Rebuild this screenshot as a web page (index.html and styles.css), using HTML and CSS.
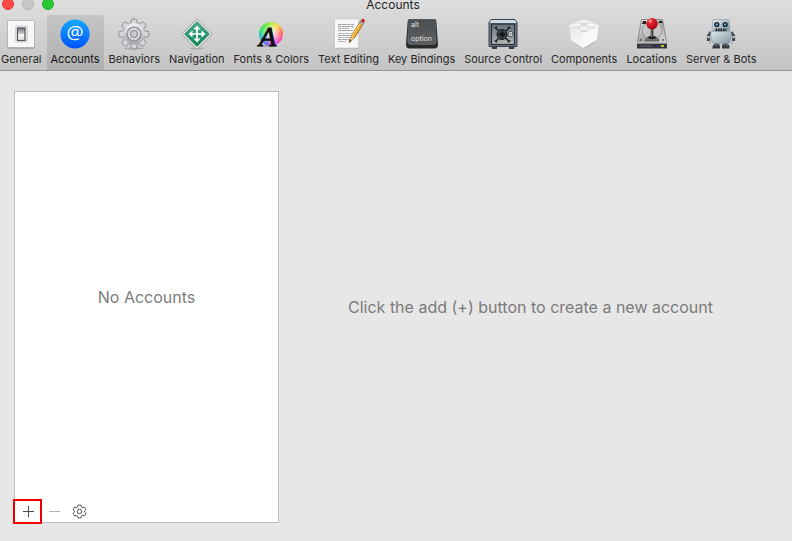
FILE: index.html
```html
<!DOCTYPE html>
<html lang="en">
<head>
<meta charset="utf-8">
<title>Accounts</title>
<link rel="stylesheet" href="styles.css">
</head>
<body>
<header class="chrome">
  <div class="titlebar">
    <div class="lights">
      <button class="light close" aria-label="Close"></button>
      <button class="light minimize" aria-label="Minimize" disabled></button>
      <button class="light expand" aria-label="Zoom"></button>
    </div>
    <h1 class="title">Accounts</h1>
  </div>
  <nav class="toolbar">
    <button class="tab">
      <svg class="icon" viewBox="0 0 32 32">
        <defs>
          <linearGradient id="switch" x1="0" y1="0" x2="0" y2="1"><stop offset="0" stop-color="#777a80"/><stop offset=".45" stop-color="#c8cacd"/><stop offset=".5" stop-color="#f8f8f8"/><stop offset="1" stop-color="#dcdcde"/></linearGradient>
        </defs>
        <rect x="2.500" y="3" width="27.500" height="27.500" rx="1" fill="#888"/>
        <rect x="2.500" y="2.500" width="27" height="27" rx=".5" fill="#f7f7f8" stroke="#aaa" stroke-width=".7"/>
        <rect x="10.500" y="8" width="12" height="16" rx="1" fill="#e4e4e6" stroke="#c4c4c6" stroke-width=".6"/>
        <rect x="12.500" y="10" width="7.500" height="12.500" fill="url(#switch)" stroke="#56585c" stroke-width="1.200"/>
      </svg>
      <span>General</span>
    </button>
    <button class="tab selected" aria-current="page">
      <svg class="icon" viewBox="0 0 32 32">
        <defs><linearGradient id="at" x1="0" y1="0" x2="0" y2="1"><stop offset="0" stop-color="#14aaff"/><stop offset="1" stop-color="#0050ff"/></linearGradient></defs>
        <circle cx="16" cy="16" r="14.600" fill="url(#at)"/>
        <text x="16" y="21" class="at-sign">@</text>
      </svg>
      <span>Accounts</span>
    </button>
    <button class="tab">
      <svg class="icon" viewBox="0 0 32 32">
        <defs>
          <linearGradient id="steel" x1="0" y1="0" x2="0" y2="1"><stop offset="0" stop-color="#f1f1f2"/><stop offset="1" stop-color="#a4a7ac"/></linearGradient>
          <path id="tooth" d="M12.500 6.500 13.500 1.300Q16 .6 18.500 1.300L19.500 6.500Z"/>
        </defs>
        <ellipse cx="16" cy="30.500" rx="10" ry="1" fill="#aaa"/>
        <g fill="#d5d6d9" stroke="#85878c" stroke-width=".9">
          <use href="#tooth"/><use href="#tooth" transform="rotate(45 16 16)"/><use href="#tooth" transform="rotate(90 16 16)"/><use href="#tooth" transform="rotate(135 16 16)"/><use href="#tooth" transform="rotate(180 16 16)"/><use href="#tooth" transform="rotate(225 16 16)"/><use href="#tooth" transform="rotate(270 16 16)"/><use href="#tooth" transform="rotate(315 16 16)"/>
        </g>
        <circle cx="16" cy="16" r="10.700" fill="url(#steel)"/>
        <circle cx="16" cy="16" r="7" fill="#c5c7ca" stroke="#888b92" stroke-width="1.200"/>
        <circle cx="16" cy="16" r="5" fill="#b5b7bb" stroke="#ededee"/>
        <circle cx="16" cy="16" r="3.500" fill="#c8c9cb" stroke="#85888f"/>
      </svg>
      <span>Behaviors</span>
    </button>
    <button class="tab">
      <svg class="icon" viewBox="0 0 32 32">
        <defs><linearGradient id="sign" x1="0" y1="0" x2="0" y2="1"><stop offset="0" stop-color="#4bb18c"/><stop offset="1" stop-color="#128356"/></linearGradient></defs>
        <ellipse cx="16" cy="30.500" rx="7" ry="1" fill="#aaa"/>
        <path d="M16 .8 31.200 16 16 31.200.8 16Z" fill="#f3f4f4" stroke="#8d9290" stroke-width=".9" stroke-linejoin="round"/>
        <path d="M16 3.500 28.500 16 16 28.500 3.500 16Z" fill="url(#sign)" stroke="#28765a" stroke-width=".8"/>
        <path d="M16 10v12M10 16h12" stroke="#fff" stroke-width="1.700"/>
        <path d="m16 7.500 3.500 4h-7ZM16 24.500l3.500-4h-7ZM7.500 16l4-3.500v7ZM24.500 16l-4-3.500v7Z" fill="#fff"/>
      </svg>
      <span>Navigation</span>
    </button>
    <button class="tab">
      <span class="icon wheel-icon">
        <span class="wheel"></span>
        <svg class="icon letter" viewBox="0 0 32 32"><ellipse cx="13" cy="28" rx="8" ry="1" fill="#777" opacity=".5"/><text x="4" y="27.500" class="font-letter">A</text></svg>
      </span>
      <span>Fonts &amp; Colors</span>
    </button>
    <button class="tab">
      <svg class="icon" viewBox="0 0 32 32">
        <rect x="1.500" y="1.500" width="24" height="29.500" fill="#b4b4b4"/>
        <rect x="1.500" y="1" width="24" height="29" fill="#f8f8f8" stroke="#c6c6c6" stroke-width=".6"/>
        <path d="M5 6.500h16M5 8.500h16M5 12.500h15M5 17.500h15M5 21.500h12" stroke="#888" stroke-width=".8" stroke-dasharray="3 .7 5 .6"/>
        <path d="M5 10.500h11M5 15.500h14M5 19.500h13M5 23.500h8" stroke="#999" stroke-width=".8" stroke-dasharray="4 .6 2 .6"/>
        <path d="m16 24.500 2.500-7L28 2.500 31 4.500 21.500 20Z" fill="#f1aa26" stroke="#855319" stroke-width=".7"/>
        <path d="m18.500 19 9-14" stroke="#ffe184" stroke-width="1"/>
        <path d="m16 24.500 2.500-6 3 2Z" fill="#e4c49d"/><path d="m16 24.500 1-2.700 1.500 1Z" fill="#222"/>
        <path d="m26.500 5 3.300 2.200 1-1.600-3.300-2.200Z" fill="#bac3cc" stroke="#596a7b" stroke-width=".5"/>
        <path d="m27.800 2.800 1-1.500Q29.500.3 31.200 1.200 32.500 2.500 31 4.700Z" fill="#cf1e21"/>
      </svg>
      <span>Text Editing</span>
    </button>
    <button class="tab">
      <svg class="icon" viewBox="0 0 32 32">
        <defs><linearGradient id="key" x1="0" y1="0" x2="0" y2="1"><stop offset="0" stop-color="#4c4f52"/><stop offset="1" stop-color="#5c5f62"/></linearGradient></defs>
        <path d="M4 1h24q2 0 2.300 2L32 26.500q0 4-3.500 4h-25Q0 30.500 0 26.500L1.700 3Q2 1 4 1Z" fill="#282a2c"/>
        <path d="M5 1.500h22q2 0 2.200 2l1 20q0 3-2.500 3H4.300q-2.500 0-2.500-3l1-20q.2-2 2.200-2Z" fill="url(#key)" stroke="#77797b" stroke-width=".5"/>
        <text x="5" y="9" class="key-label">alt</text><text x="5" y="23" class="key-label">option</text>
      </svg>
      <span>Key Bindings</span>
    </button>
    <button class="tab">
      <svg class="icon" viewBox="0 0 32 32">
        <defs><linearGradient id="door" x1="0" y1="0" x2="0" y2="1"><stop offset="0" stop-color="#66717a"/><stop offset="1" stop-color="#b4b9b7"/></linearGradient></defs>
        <path d="M4 27h6v4H5ZM22 27h6l-1 4h-5Z" fill="#343b42"/>
        <path d="M4 1.500h24l2 3v24H2v-24Z" fill="#6d7c87" stroke="#38434d"/>
        <path d="M4 2h24l1.500 3h-27Z" fill="#cbdce5"/>
        <rect x="4.500" y="6" width="23" height="20.500" fill="url(#door)" stroke="#252e35" stroke-width="1.200"/>
        <path d="m8.500 9.500 13.500 14M22.500 9.500 8.500 23.500" stroke="#181c20" stroke-width="1.500"/>
        <path d="m7.500 10.500 2.500-2M21 8.500l2.500 2M7.500 22.500l2.500 2M21 24.500l2.500-2" stroke="#252b30" stroke-width="1.400"/>
        <circle cx="15" cy="16.500" r="5" fill="#343a40" stroke="#14181b"/><circle cx="15" cy="16.500" r="2.500" fill="#11171b"/>
        <path d="m11.500 13 1.500 1.500m4 4 1.500 1.500m0-7L17 14.500m-4 4L11.500 20" stroke="#687077" stroke-width=".8"/>
        <circle cx="23.500" cy="16" r="2.600" fill="#dbe1e5" stroke="#3a424a"/><circle cx="23.500" cy="16" r=".9" fill="#7b858d"/>
      </svg>
      <span>Source Control</span>
    </button>
    <button class="tab">
      <svg class="icon" viewBox="0 0 32 32">
        <defs><linearGradient id="brick" x1="0" y1="0" x2="0" y2="1"><stop offset="0" stop-color="#e6e6e6"/><stop offset="1" stop-color="#fafafa"/></linearGradient></defs>
        <path d="m3 21 13 9 12.500-8v1.500L16 31.500 3 23Z" fill="#b9b9b9"/>
        <path d="M1.500 7.500 15 14.500v15.500L4 23q-1-.6-1.100-2Z" fill="url(#brick)"/>
        <path d="M30.500 7.500 15 14.500v15.500L28 22.500q1-.6 1.100-2Z" fill="#f9f9f9"/>
        <path d="M1.500 7.500 14 2.300q2-.8 4 0L30.500 7.500 17 14.500q-2 .9-4 0Z" fill="#ececec" stroke="#fafafa" stroke-width=".8"/>
        <path d="M4 7.500a4.500 2 0 0 1 9 0v1.500a4.500 2 0 0 1-9 0ZM19 7.500a4.500 2 0 0 1 9 0v1.500a4.500 2 0 0 1-9 0Z" fill="#e1e1e1"/>
        <path d="M11.500 3.500v2a4.500 2 0 0 0 9 0v-2ZM11.500 10v2a4.500 2 0 0 0 9 0v-2Z" fill="#d7d7d7"/>
        <g fill="#f5f5f5" stroke="#dcdcdc" stroke-width=".5"><ellipse cx="16" cy="3.500" rx="4.500" ry="1.800"/><ellipse cx="8.500" cy="7" rx="4.500" ry="1.800"/><ellipse cx="23.500" cy="7" rx="4.500" ry="1.800"/><ellipse cx="16" cy="10.500" rx="4.500" ry="1.800"/></g>
      </svg>
      <span>Components</span>
    </button>
    <button class="tab">
      <svg class="icon" viewBox="0 0 32 32">
        <defs>
          <linearGradient id="drive" x1="0" y1="0" x2="1" y2="1"><stop offset="0" stop-color="#eee"/><stop offset=".5" stop-color="#aaa"/><stop offset="1" stop-color="#ddd"/></linearGradient>
          <radialGradient id="ball" cx=".35" cy=".25" r=".8"><stop offset="0" stop-color="#ffc0c0"/><stop offset=".25" stop-color="#ed2633"/><stop offset="1" stop-color="#9c0010"/></radialGradient>
        </defs>
        <path d="M5.500 1.500h21l4 23H1.500Z" fill="url(#drive)" stroke="#777" stroke-width=".8"/>
        <path d="M1 25h30v5.500H1Z" fill="#34353a"/><path d="M1 25h30" stroke="#e9e9e9"/>
        <ellipse cx="16" cy="12" rx="10" ry="9" fill="#c5c5c6" stroke="#868686" stroke-width=".7"/>
        <path d="M7 3h3v3H6Zm16 0h3l.5 2H23Z" fill="#222"/>
        <circle cx="5" cy="22" r="1" fill="#555"/><circle cx="27" cy="22" r="1" fill="#555"/>
        <path d="M9 23q0-4 7-4t7 4Z" fill="#777" stroke="#484848" stroke-width=".7"/>
        <ellipse cx="16" cy="19.500" rx="4" ry="1.700" fill="#222"/>
        <path d="M16 10v10" stroke="#29292b" stroke-width="2.600"/><path d="M15.700 11v8" stroke="#aaa" stroke-width=".7"/>
        <circle cx="16" cy="5.800" r="5.700" fill="url(#ball)"/>
        <path d="M4 28h12" stroke="#64666e"/><path d="M25 28h3" stroke="#f5e32b" stroke-width="1.600"/><path d="M22 28h2" stroke="#3546d4"/>
      </svg>
      <span>Locations</span>
    </button>
    <button class="tab">
      <svg class="icon" viewBox="0 0 32 32">
        <defs><linearGradient id="robot" x1="0" y1="0" x2="1" y2="1"><stop offset="0" stop-color="#dfe9ed"/><stop offset="1" stop-color="#8598a2"/></linearGradient></defs>
        <path d="M8 1.500h16l1 11H7Z" fill="url(#robot)" stroke="#8799a1" stroke-width=".6"/>
        <g fill="#131a20"><circle cx="11.800" cy="6.500" r="2.600"/><circle cx="20.200" cy="6.500" r="2.600"/><path d="M10.500 10.500h11v3h-11Z"/></g>
        <g fill="#5cb0dd"><circle cx="11.800" cy="6.500" r="1.200"/><circle cx="20.200" cy="6.500" r="1.200"/></g>
        <path d="M12.500 10v3m2.500-3v3m2.500-3v3m2.500-3v3" stroke="#c1ced4" stroke-width=".7"/>
        <path d="M6 14 3.500 18v5M26 14l2.500 4v5" stroke="#444c52" stroke-width="3.200" fill="none"/>
        <path d="M2 19h3.500M26.500 19H30" stroke="#a9b7be" stroke-width="2"/>
        <path d="m5.500 23-1 3M26.500 23l1 3" stroke="#a9b7be" stroke-width="2"/>
        <path d="M8 13.500h16q2.500 0 2.500 2.500l-1.500 7.500q-.5 2-2.500 2h-13q-2 0-2.500-2L5.500 16q0-2.500 2.500-2.500Z" fill="url(#robot)" stroke="#82919a" stroke-width=".6"/>
        <path d="M7.500 30.500v-2q1-3 4-3t3.500 3v2ZM17 30.500v-2q0-3 3.500-3t4 3v2Z" fill="#353b40"/><path d="M9 27h4m6 0h4" stroke="#76828a"/>
      </svg>
      <span>Server &amp; Bots</span>
    </button>
  </nav>
</header>
<main class="content">
  <section class="accounts">
    <p class="empty">No Accounts</p>
    <div class="actions">
      <button class="action add" aria-label="Add account"><svg class="glyph" viewBox="0 0 15 15"><path d="M7.500 2v11M2 7.500h11"/></svg></button>
      <button class="action remove" aria-label="Remove account" disabled><svg class="glyph" viewBox="0 0 15 15"><path d="M2 7.500h11"/></svg></button>
      <button class="action" aria-label="Account options"><svg class="glyph" viewBox="0 0 15 15"><path d="M6 1.200Q7.500.8 9 1.200L9.500 3 10.500 3.600 12.400 3.100Q13.500 4.200 13.900 5.700L12.500 7V8L13.900 9.300Q13.500 10.800 12.400 11.900L10.500 11.400 9.500 12 9 13.800Q7.500 14.200 6 13.800L5.500 12 4.500 11.400 2.600 11.900Q1.500 10.800 1.100 9.300L2.500 8V7L1.100 5.700Q1.500 4.200 2.600 3.100L4.500 3.600 5.500 3Z"/><circle cx="7.500" cy="7.500" r="2.200"/></svg></button>
    </div>
  </section>
  <section class="detail"><p>Click the add (+) button to create a new account</p></section>
</main>
</body>
</html>
```
FILE: styles.css
```css
* { box-sizing: border-box; }
body {
  margin: 0;
  min-height: 100vh;
  display: flex;
  flex-direction: column;
  background: #e7e7e7;
  color: #262626;
  font-family: Inter, "Liberation Sans", sans-serif;
}
button {
  padding: 0;
  border: 0;
  background: none;
  color: inherit;
  font: inherit;
}
svg { display: block; overflow: visible; }
h1, p { margin: 0; }

.chrome {
  overflow: hidden;
  border-bottom: 1px solid #979797;
  background: linear-gradient(#dedede, #c4c4c4);
}
.titlebar {
  display: grid;
  grid-template-columns: 60px 1fr 66px;
  align-items: center;
  height: 22px;
  margin-top: -7px;
}
.lights { display: flex; gap: 8px; padding-left: 2px; }
.light {
  width: 12px;
  height: 12px;
  border: 1px solid #e33e3b;
  border-radius: 50%;
  background: #fc4a48;
}
.minimize { border-color: #b4b4b4; background: #c8c8c8; }
.expand { border-color: #1fac2c; background: #29c732; }
.title {
  padding-top: 2px;
  font-size: 12px;
  line-height: 16px;
  font-weight: 400;
  text-align: center;
}

.toolbar { display: flex; gap: 1px; margin-left: -3px; }
.tab {
  flex: none;
  display: flex;
  flex-direction: column;
  align-items: center;
  gap: 1px;
  height: 55px;
  padding: 3px 4px 0;
  border-radius: 4px 4px 0 0;
  font-size: 11px;
  line-height: 16px;
  white-space: nowrap;
}
.selected { background: linear-gradient(#c4c4c4, #b0b0b0); color: #111; }
.icon { width: 32px; height: 32px; }
.at-sign {
  fill: #fff;
  font: 19px "Open Sans", sans-serif;
  text-anchor: middle;
}
.wheel-icon { display: grid; place-items: center; }
.wheel {
  grid-area: 1 / 1;
  width: 24px;
  height: 24px;
  border-radius: 50%;
  background:
    radial-gradient(circle, #ffffff 0, #ffffff00 65%),
    conic-gradient(#a8f040, #ffd34c, #ff7058, #ff50a0, #e050f0, #8060f0, #30a8f0, #20dc80, #50e540, #a8f040);
}
.letter { grid-area: 1 / 1; }
.font-letter { fill: #0d0d0d; stroke: #0d0d0d; font: italic 28px "Liberation Serif", serif; }
.key-label { fill: #e0e0e0; font: 7px Inter, sans-serif; }

.content { flex: 1; display: flex; padding: 20px 10px 18px 14px; }
.accounts {
  flex: 0 0 265px;
  display: flex;
  flex-direction: column;
  border: 1px solid #bdbdbd;
  background: #fff;
}
.empty, .detail {
  flex: 1;
  display: flex;
  align-items: center;
  justify-content: center;
  color: #7b7b7b;
  font-size: 16px;
  line-height: 20px;
}
.empty { padding-top: 2px; }
.actions { display: flex; margin: 0 0 -2px -2px; }
.action {
  display: grid;
  place-items: center;
  width: 25px;
  height: 25px;
}
.add { width: 29px; padding-left: 2px; border: 2px solid #f00000; }
.glyph { width: 15px; height: 15px; fill: none; stroke: #4b4b4b; }
.remove .glyph { stroke: #b4b4b4; }
```
